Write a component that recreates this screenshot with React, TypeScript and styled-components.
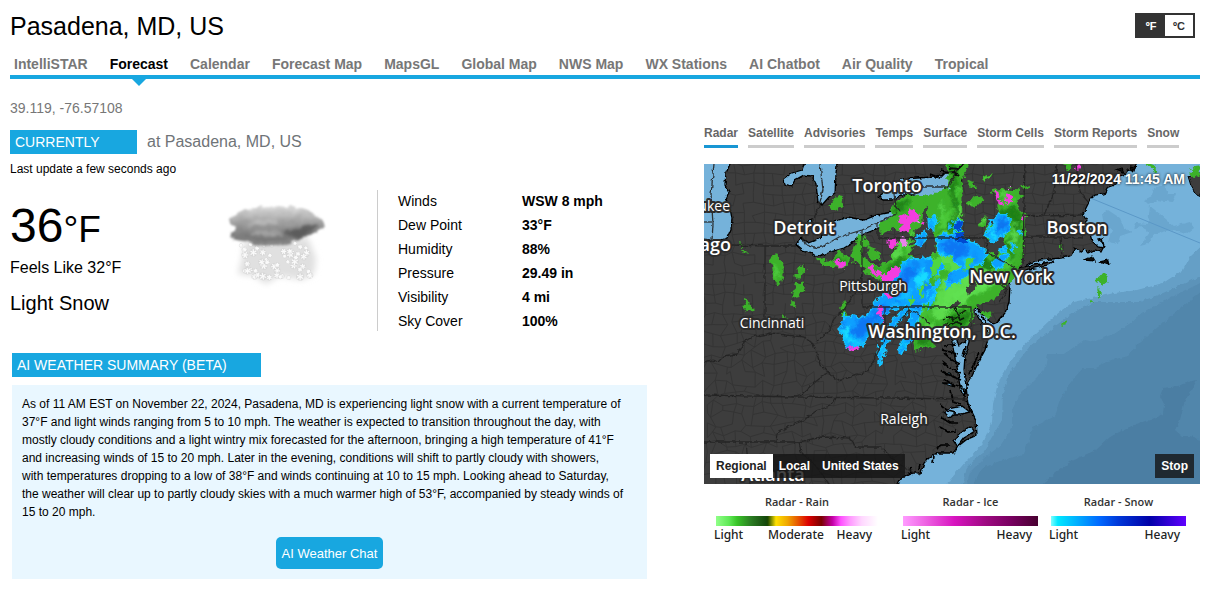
import React, { useState } from 'react';
import styled, { createGlobalStyle } from 'styled-components';

const BLUE = '#18a7e0';

const GlobalStyle = createGlobalStyle`
  * { box-sizing: border-box; }
  body {
    margin: 0;
    background: #fff;
    color: #000;
    font-family: "Liberation Sans", Arial, Helvetica, sans-serif;
  }
  button { font-family: inherit; cursor: pointer; }
`;

const Page = styled.main`
  padding: 11px 13px 13px 10px;
`;

const Header = styled.header`
  display: flex;
  justify-content: space-between;
  padding-right: 5px;
`;

const Title = styled.h1`
  margin: 0;
  font-size: 25px;
  font-weight: 400;
  line-height: 30px;
`;

const UnitToggle = styled.div`
  display: flex;
  height: 25px;
  margin-top: 2px;
  border: 2px solid #333;
`;

const UnitButton = styled.button<{ $active: boolean }>`
  width: 28px;
  padding: 0;
  border: 0;
  font-size: 11px;
  font-weight: 700;
  line-height: 20px;
  color: ${p => (p.$active ? '#fff' : '#333')};
  background: ${p => (p.$active ? '#333' : '#fff')};
`;

const Nav = styled.nav`
  display: flex;
  gap: 22px;
  margin-top: 13px;
  padding: 0 4px;
  border-bottom: 4px solid ${BLUE};
`;

const NavLink = styled.a<{ $active?: boolean }>`
  position: relative;
  padding-bottom: 1px;
  font-size: 14px;
  font-weight: 700;
  line-height: 20px;
  white-space: nowrap;
  text-decoration: none;
  color: ${p => (p.$active ? '#000' : '#777')};
  ${p => p.$active && `
    &::after {
      content: "";
      position: absolute;
      top: 25px;
      left: 50%;
      margin-left: -7px;
      border: 7px solid transparent;
      border-bottom-width: 0;
      border-top-color: ${BLUE};
    }
  `}
`;

const Columns = styled.div`
  display: grid;
  grid-template-columns: minmax(0, 1fr) 496px;
`;

const LeftColumn = styled.section`
  padding: 19px 57px 0 0;
`;

const Coordinates = styled.div`
  font-size: 14px;
  line-height: 20px;
  color: #777;
`;

const CurrentRow = styled.div`
  display: flex;
  align-items: center;
  gap: 10px;
  margin-top: 12px;
`;

const SectionLabel = styled.h2<{ $width: number }>`
  width: ${p => p.$width}px;
  margin: 0;
  padding-left: 5px;
  font-size: 14px;
  font-weight: 400;
  line-height: 24px;
  color: #fff;
  background: ${BLUE};
`;

const Place = styled.span`
  font-size: 16px;
  line-height: 24px;
  color: #6f7478;
`;

const Updated = styled.div`
  margin-top: 6px;
  font-size: 12px;
  line-height: 18px;
`;

const Conditions = styled.div`
  display: flex;
  height: 141px;
  margin-top: 12px;
`;

const Reading = styled.div`
  width: 216px;
`;

const Temperature = styled.div`
  padding-top: 8px;
  font-size: 48px;
  line-height: 56px;
`;

const Degree = styled.span`
  font-size: 37px;
`;

const FeelsLike = styled.div`
  font-size: 16px;
  line-height: 20px;
`;

const Sky = styled.div`
  margin-top: 13px;
  font-size: 20px;
  line-height: 24px;
`;

const IconCell = styled.div`
  width: 152px;
  padding-top: 8px;
  border-right: 1px solid #ccc;
  svg { display: block; }
`;

const Details = styled.table`
  height: 144px;
  margin: -1px 0 0 20px;
  border-collapse: collapse;
  font-size: 14px;
  line-height: 24px;
  th, td { padding: 0; text-align: left; }
  th { width: 124px; font-weight: 400; }
  td { font-weight: 700; }
`;

const Summary = styled.section`
  margin: 22px 0 0 2px;
`;

const SummaryBox = styled.div`
  margin-top: 8px;
  padding: 10px;
  background: #e9f7ff;
`;

const SummaryText = styled.p`
  margin: 0 0 16px;
  font-size: 12px;
  line-height: 18px;
  white-space: pre-line;
`;

const ChatButton = styled.button`
  display: block;
  height: 32px;
  margin: 0 auto;
  padding: 0 6px;
  border: 0;
  border-radius: 5px;
  font-size: 13px;
  color: #fff;
  background: ${BLUE};
`;

const RightColumn = styled.section`
  padding-top: 44px;
`;

const LayerTabs = styled.div`
  display: flex;
  gap: 10px;
`;

const LayerTab = styled.button<{ $active: boolean }>`
  padding: 0 0 2px;
  border: 0;
  border-bottom: 3px solid ${p => (p.$active ? '#1896d3' : '#ccc')};
  background: none;
  font-size: 12px;
  font-weight: 700;
  line-height: 20px;
  white-space: nowrap;
  color: #666;
`;

const MapFrame = styled.div`
  position: relative;
  margin-top: 16px;
  height: 320px;
  overflow: hidden;
  > svg { display: block; width: 100%; height: 100%; }
`;

const MapTime = styled.time`
  position: absolute;
  top: 6px;
  right: 15px;
  font-size: 14px;
  font-weight: 700;
  line-height: 18px;
  color: #fff;
  text-shadow: 0 0 3px #000;
`;

const MapControls = styled.div`
  position: absolute;
  left: 6px;
  right: 6px;
  bottom: 6px;
  display: flex;
  justify-content: space-between;
`;

const ControlGroup = styled.div`
  display: flex;
  background: rgba(20, 20, 20, 0.8);
`;

const ControlButton = styled.button<{ $active?: boolean }>`
  height: 24px;
  padding: 0 6px;
  border: 0;
  font-size: 12px;
  font-weight: 700;
  color: ${p => (p.$active ? '#222' : '#fff')};
  background: ${p => (p.$active ? '#fff' : 'transparent')};
`;

const Legends = styled.div`
  display: flex;
  padding: 9px 12px 0;
`;

const Legend = styled.div<{ $width: number; $gap: number }>`
  width: ${p => p.$width}px;
  margin-right: ${p => p.$gap}px;
  font-family: "Open Sans", "Noto Sans", sans-serif;
`;

const LegendTitle = styled.div`
  font-size: 11px;
  font-weight: 600;
  line-height: 18px;
  text-align: center;
  color: #333;
`;

const LegendBar = styled.div<{ $colors: string }>`
  height: 10px;
  margin: 5px 0 0;
  background: linear-gradient(to right, ${p => p.$colors});
`;

const LegendScale = styled.div`
  display: grid;
  grid-template-columns: 1fr auto 1fr;
  margin-left: -2px;
  font-family: "Noto Sans", "Open Sans", sans-serif;
  font-size: 12px;
  font-weight: 500;
  line-height: 18px;
  color: #222;
  span:last-child { text-align: right; padding-right: 6px; }
`;

/* Deterministic pseudo random numbers, so each render draws the same lines. */
const makeRandom = (seed: number) => () => {
  seed = (seed * 1664525 + 1013904223) % 4294967296;
  return seed / 4294967296;
};

const countyMesh = (() => {
  const rnd = makeRandom(7);
  const step = 10;
  const cols = 42;
  const rows = 34;
  const pts: number[][][] = [];
  for (let r = 0; r <= rows; r++) {
    pts.push([]);
    for (let c = 0; c <= cols; c++) {
      const wobble = r > 15 ? 8 : 4;
      pts[r].push([
        Math.round((c * step + (rnd() - 0.5) * wobble) * 10) / 10,
        Math.round((r * step + (rnd() - 0.5) * wobble) * 10) / 10,
      ]);
    }
  }
  let d = '';
  for (let r = 0; r < rows; r++) {
    for (let c = 0; c < cols; c++) {
      const [x, y] = pts[r][c];
      if (rnd() > 0.12) d += `M${x} ${y}L${pts[r][c + 1].join(' ')}`;
      if ((r + c) % 2 === 0 || rnd() > 0.55) d += `M${x} ${y}L${pts[r + 1][c].join(' ')}`;
    }
  }
  return d;
})();

/* Short slanted streaks that give the echoes their grain. */
const makeStreaks = (seed: number, count: number, box: number[], tones: string[]) => {
  const rnd = makeRandom(seed);
  return Array.from({ length: count }, () => ({
    x: box[0] + rnd() * box[2],
    y: box[1] + rnd() * box[3],
    rx: 1.5 + rnd() * 3,
    ry: 3 + rnd() * 8,
    turn: 10 + rnd() * 50,
    fill: tones[Math.floor(rnd() * tones.length)],
  }));
};

const greenStreaks = makeStreaks(12, 170, [172, 0, 150, 190], ['#2c9420', '#54d843', '#6fea5c', '#319f24', '#4ccb3b']);
const blueStreaks = makeStreaks(5, 130, [134, 50, 175, 150], ['#00b8ff', '#0c8af8', '#0a74ee', '#12cfff', '#1496ff']);

const stateLines = [
  'M27 81L61 82L92 82', 'M61 82V166', 'M158 66V143H267V162', 'M174 60V74H282L283 88L296 96L311 104',
  'M158 110L156 126L148 132L140 146L132 152L124 168L113 178',
  'M0 198L8 196L14 198L20 192L33 190L40 178L48 173L67 169L82 171L100 173L108 178L113 190L116 200L124 208',
  'M88 233L98 230L110 219L124 208L133 216L147 213L163 208L170 196L176 184L186 168L198 154L206 146L218 152L226 160',
  'M0 231L90 233L180 234L262 235', 'M72 278L73 269L86 262L100 256L112 247L126 242L131 234',
  'M0 278H95L117 273L145 274L152 283H177L193 299L215 311', 'M42 278L46 320', 'M95 278L97 288L112 302L125 320',
  'M97 70L101 80L110 84L118 83L135 73L158 66L175 58L193 50', 'M116 0L119 26L114 46L107 62', 'M190 30L192 42L196 47',
  'M218 23H243L249 15L253 5L260 0', 'M10 0L7 30L9 60L8 76', 'M0 58H9',
  'M318 51L340 52L378 51', 'M319 73L356 73L379 74', 'M321 0L320 40L319 100', 'M356 73L358 93',
  'M353 0L350 28L340 51', 'M372 0L376 28L384 38', 'M181 143V160', 'M294 118L303 126L296 138',
];

const oceanPath =
  'M434 -8L430 7L424 6L420 12L413 14L411 21L403 24L400 30L391 31L386 36L382 44L379 50L383 56L380 63L386 70L388 77L394 83L399 84L398 78L394 75L398 74L400 82L397 88L390 86L384 89L380 85L376 88L371 84L366 92L358 94L346 95L336 96L326 99L318 104L309 109L305 115L306 122L305 138L301 149L293 159L288 160L283 152L277 150L272 142L271 148L277 158L282 166L284 174L281 186L274 199L268 212L262 222L264 240L272 256L273 271L262 276L253 283L249 289L233 289L225 294L220 299L217 309L207 309L197 314L190 328H506V-8Z';

const depths = [
  { fill: '#659fc6', d: 'M506 74L486 93L479 106L459 119L433 126L410 129L393 133L369 138L358 146L346 156L329 172L312 190L303 203L297 212L293 223L289 240L288 259L279 279L263 296L246 316L240 328H506Z' },
  { fill: '#5b93b9', d: 'M506 108L459 129L436 138L410 138L390 138L379 143L366 151L346 166L326 182L313 199L304 212L299 229L298 256L288 273L279 289L263 303L257 328H506Z' },
  { fill: '#568cb2', d: 'M506 114L462 136L440 148L428 158L410 170L390 178L380 176L360 190L344 190L340 206L326 220L316 230L308 246L308 264L296 282L280 294L266 308L261 328H506Z' },
  { fill: '#5186ab', d: 'M506 120L482 140L460 158L448 168L436 178L423 192L404 197L391 204L379 204L370 214L363 223L355 238L351 252L340 258L329 263L325 276L320 290L306 294L293 298L277 305L266 328H506Z' },
  { fill: '#4c7ea3', d: 'M493 216L484 218L474 222L459 224L456 232L460 240L459 250L446 256L432 260L419 266L406 273L392 286L369 296L352 308L330 328H506V279L486 272L478 272L471 266L476 256L480 240Z' },
  { fill: '#6aa6ce', d: 'M398 50L404 46L416 54L420 64L428 68L416 72L414 80L404 78L408 66L400 62Z' },
  { fill: '#6aa6ce', d: 'M436 82L446 68L436 62L430 66L432 59L444 60L446 42L456 50L470 62L486 58L490 64L482 70L466 66L450 70L444 80Z' },
  { fill: '#6aa6ce', d: 'M440 36L448 32L450 24L460 20L464 30L472 30L468 38L454 36L444 40Z' },
];

const lakes = [
  'M-4 -8H26V0L22 9L21 20L25 28L22 35L26 44L28 55L27 65L23 74L17 76H6L-4 75Z',
  'M102 -6L98 6L88 9L80 15L81 21L87 23L91 16L100 11L108 12L112 20L114 38L118 41L125 33L131 29L132 10L134 -6Z',
  'M104 57L108 55L109 60L106 63L104 61Z',
  'M92 81L97 74L104 79L112 76L125 66L130 58L143 53L160 56L173 51L188 48L194 46L190 53L180 62L160 70L150 78L140 84L126 88L113 93L106 88L98 86Z',
  'M175 33L179 27L188 27L197 15L213 14L230 13L242 9L256 6L256 28L244 33L223 35L210 31L198 31L188 36L178 36Z',
  'M246 150L250 148L251 158L250 168L255 182L260 178L265 168L265 178L261 192L260 206L262 222L260 234L256 224L254 208L251 194L248 178Z',
  'M240 248L248 244L258 242L266 248L258 250L250 250L246 254Z', 'M238 208L248 212L246 209Z', 'M238 219L250 223L246 219Z',
  'M250 276L258 268L266 262L270 268L260 274L254 282Z',
];

const inlets =
  'M249 152L246 158M250 160L244 166M251 170L242 172L236 178M252 180L240 182M253 190L246 188L238 186M256 200L248 196L240 189M256 209L246 204L238 198M257 216L247 212L236 206M258 223L248 220L240 215M257 240L249 238L247 226M252 249L244 247L236 240M254 259L246 259L238 254M252 267L244 268L236 263M246 281L238 281L232 285M275 188L271 198L265 210M262 182L259 192M230 292L229 298M226 10L236 14L242 8L252 12M236 6L248 8L254 2M216 300L215 306M208 310L207 304M250 140L244 145M262 144L256 148M298 152L294 157M278 152L282 159M256 222L262 228L258 232M262 236L268 250';

const greens = [
  'M242 -6H264V0L260 10L258 20L257 72L272 80L284 89L298 94L311 102L307 117L294 131L280 139L270 144L268 157L261 164L242 168L236 176L226 182L211 186L209 177L216 162L210 150L200 138L194 120L186 112L178 118L168 112L160 108L160 104L178 101L190 92L193 80L205 73L211 80L204 91L214 96L228 94L232 84L231 72L226 62L224 45L222 34L230 30L240 28L246 22Z',
  'M188 40L204 32L222 33L221 42L219 54L215 62L207 72L202 66L190 63L176 70L176 62L190 52Z',
  'M288 28L300 25L315 26L318 32L313 40L315 46L322 52L320 70L318 96L308 110L298 108L287 98L296 88L304 80L300 72L284 76L281 69L288 60L296 48L294 42L298 38Z',
  'M148 90L152 80L158 71L162 76L158 85L160 95L172 102L168 108L158 100L150 98Z', 'M164 84L174 88L176 95L168 96Z',
  'M158 75L164 76L165 82L160 82Z', 'M114 94L122 97L130 95L133 88L140 90L145 94L144 102L135 104L125 103L115 100Z',
  'M123 40L130 37L133 31L138 34L138 42L134 46L127 43Z', 'M67 93L72 90L77 98L79 107L75 120L72 118L69 105Z',
  'M91 112L94 106L100 102L101 106L96 108L94 114Z', 'M89 132L93 120L99 118L100 124L96 132L92 133Z',
  'M42 136L46 138L44 142L49 146L46 147L41 145Z', 'M36 78L38 82L37 83ZM39 86L43 88L41 89ZM87 138H91V141H87ZM80 152L84 156L80 158Z',
  'M264 20L268 18L273 22L266 23ZM264 38L270 34L277 33L279 36L274 41L266 42ZM274 60L278 57L283 52L281 62L276 63ZM279 14L288 9L286 13L280 16Z',
  'M318 23L326 21L323 25ZM278 150L284 148L288 151L280 152Z', 'M395 114L399 109L404 112L403 118L398 122L394 119Z', 'M394 125L397 130L395 133Z',
  'M441 0H448L454 7L449 5ZM488 5L496 4V14L492 10L487 14Z', 'M358 158H361V160H358ZM356 81H359V84H356ZM386 137H388V139H386Z',
  'M137 142L140 138L141 147L143 152L138 152Z', 'M360 0H368L364 5Z',
];

const darkGreens = [
  'M246 0L254 0L252 20L254 44L250 70L244 66L248 44L244 20Z', 'M252 66L262 80L280 92L296 98L288 108L268 92L254 80Z',
  'M304 40L314 44L318 60L312 80L306 96L304 82L310 62L298 48Z', 'M194 38L206 35L200 44L190 52Z', 'M240 154L266 148L262 162L244 166Z',
  'M212 176L226 168L232 174L220 182Z', 'M180 104L194 96L200 90L196 104L186 108Z', 'M132 92L142 94L138 100L130 98Z', 'M216 94L230 100L226 112L218 106Z',
];

const lightGreens = [
  'M236 40L242 36L240 60L246 90L256 100L272 104L284 110L292 120L276 130L256 140L246 132L254 124L248 112L236 100L234 76L240 66Z',
  'M256 112L280 104L296 108L288 118L268 126Z', 'M236 112L250 116L262 128L252 142L238 146L230 138L236 126Z', 'M196 70L202 78L196 90L188 98Z',
  'M306 66L314 60L312 82L306 88Z', 'M226 150L236 140L248 144L232 156Z', 'M70 98L75 108L73 114Z',
];

const blues = [
  'M200 98L206 94L215 96L221 92L228 96L241 101L236 108L228 111L224 120L233 130L230 136L222 140L212 146L200 142L190 146L180 150L176 160L166 172L158 182L147 186L141 180L139 172L134 166L139 160L140 152L150 151L160 155L166 148L172 138L180 130L188 120L192 112Z',
  'M211 72L222 67L223 72L218 82L211 80Z', 'M224 54L231 51L234 56L228 68L225 66Z', 'M232 74L240 70L252 68L264 76L276 82L284 90L279 98L270 102L264 112L252 120L242 121L246 110L256 104L248 92L238 92L233 84Z',
  'M250 58L255 55L258 60L257 67L250 65Z', 'M192 152L204 144L198 154L188 168L182 180L180 190L176 201L174 200L176 180L182 166Z',
  'M208 146L216 146L214 158L211 168L205 178L197 190L195 188L200 172Z', 'M286 56L294 50L306 53L306 64L300 70L294 77L286 76L281 69L288 63Z',
  'M288 100L294 94L300 90L304 92L298 102L292 105Z', 'M306 84L311 80L310 88ZM296 86L302 82L300 88ZM314 68L318 66L316 72Z', 'M222 132L230 120L236 116L232 126L226 140Z',
];

const deepBlues = [
  'M236 80L248 76L260 82L262 90L254 94L244 90Z', 'M150 158L166 152L184 140L196 134L186 148L170 162L156 172L148 168Z', 'M204 100L214 104L210 116L202 124L196 118Z',
  'M296 56L304 58L298 66L290 70Z', 'M188 120L200 110L196 128L184 134Z',
];

const darkestBlues = ['M250 58L256 56L258 61L256 66L251 65Z', 'M250 71L256 69L262 74L262 79L254 78Z'];

const cyans = [
  'M134 166L142 162L150 174L160 178L152 185L142 180Z', 'M176 178L180 178L178 192L175 196Z', 'M202 168L208 166L202 180L198 184Z',
  'M214 110L226 104L222 116L212 124Z', 'M226 54L231 54L228 64Z', 'M284 68L290 66L294 74L286 74Z',
];

const pinks = [
  'M197 50L205 52L206 47L213 46L215 54L208 60L203 69L198 66L199 60L193 59Z', 'M185 76L191 74L194 79L188 84L185 82Z', 'M164 102L170 103L174 110L167 108Z',
  'M174 107L179 108L178 113L174 111Z', 'M177 115L184 108L188 104L194 102L195 112L190 117L180 118Z', 'M181 130L186 128L187 133L183 135Z', 'M174 143L180 141L177 149L180 157L174 152Z',
  'M145 183L152 182L153 185L147 187Z', 'M132 96L137 99L140 97L141 102L137 104L132 101Z', 'M291 29L295 28L296 34L292 36Z', 'M301 30L306 30L308 37L304 40L301 36Z', 'M294 37L299 38L298 42L295 41Z',
  'M372 2L376 2L376 5L373 5Z', 'M317 53H320V57H317Z', 'M215 58L219 57L218 60Z', 'M166 106L169 105L169 106Z',
];

const holes = ['M220 43L223 44L224 66L217 68Z', 'M224 76L231 74L232 90L216 91L224 84Z', 'M286 80L298 77L302 80L292 87L287 86Z', 'M262 124L270 118L272 122L264 130Z', 'M245 140L256 138L254 142L246 144Z', 'M204 79L210 77L210 80L206 83Z'];

const cities: { name: string; x: number; y: number; big?: boolean; anchor?: 'end' }[] = [
  { name: 'Toronto', x: 183, y: 28, big: true },
  { name: 'Detroit', x: 100, y: 70, big: true },
  { name: 'Boston', x: 373, y: 70, big: true },
  { name: 'New York', x: 307, y: 119, big: true },
  { name: 'Washington, D.C.', x: 238, y: 174, big: true },
  { name: 'Atlanta', x: 69, y: 317, big: true },
  { name: 'Chicago', x: 27, y: 87, big: true, anchor: 'end' },
  { name: 'Milwaukee', x: 26, y: 47, anchor: 'end' },
  { name: 'Pittsburgh', x: 169, y: 127 },
  { name: 'Cincinnati', x: 68, y: 164 },
  { name: 'Raleigh', x: 200, y: 260 },
];

const RadarMap = () => (
  <svg viewBox="0 0 496 320" preserveAspectRatio="xMidYMid slice" role="img" aria-label="Regional radar map">
    <defs>
      <filter id="ragged" x="-5%" y="-5%" width="110%" height="110%">
        <feTurbulence type="fractalNoise" baseFrequency="0.16" numOctaves="3" seed="4" result="n" />
        <feDisplacementMap in="SourceGraphic" in2="n" scale="9" xChannelSelector="R" yChannelSelector="G" />
      </filter>
      <filter id="soft" x="-10%" y="-10%" width="120%" height="120%">
        <feTurbulence type="fractalNoise" baseFrequency="0.09" numOctaves="3" seed="9" result="n" />
        <feDisplacementMap in="SourceGraphic" in2="n" scale="14" xChannelSelector="R" yChannelSelector="G" />
        <feGaussianBlur stdDeviation="1.5" />
      </filter>
      <filter id="grain" x="-5%" y="-5%" width="110%" height="110%"><feGaussianBlur stdDeviation="0.9" /></filter>
      <filter id="coast" x="-5%" y="-5%" width="110%" height="110%">
        <feTurbulence type="fractalNoise" baseFrequency="0.2" numOctaves="2" seed="2" result="n" />
        <feDisplacementMap in="SourceGraphic" in2="n" scale="4" xChannelSelector="R" yChannelSelector="G" />
      </filter>
      <clipPath id="greenArea">{greens.map(d => <path key={d} d={d} />)}</clipPath>
      <clipPath id="blueArea">{blues.map(d => <path key={d} d={d} />)}</clipPath>
      <clipPath id="oceanArea"><path d={oceanPath} /></clipPath>
    </defs>
    <rect width="496" height="320" fill="#3d3d3d" />
    <path d={countyMesh} fill="none" stroke="#343434" strokeWidth="1" />
    <g filter="url(#coast)" stroke="#000" strokeWidth="1.3" fill="#74b2da">
      <path d={oceanPath} />
      {lakes.map(d => <path key={d} d={d} />)}
      <path d={inlets} fill="none" strokeWidth="1.7" />
      <path d="M308 107L318 103L336 100L350 97L344 101L330 104L316 107Z" fill="#3d3d3d" />
      <path d="M380 96L388 92L391 97ZM396 98L404 96L405 101ZM412 6L418 4L420 9ZM426 2L432 3L428 8Z" fill="#111" />
    </g>
    <g clipPath="url(#oceanArea)">
      {depths.map(s => <path key={s.d} d={s.d} fill={s.fill} filter="url(#coast)" />)}
      <path d="M384 33L496 79" stroke="#5b98c7" strokeWidth="1" />
    </g>
    <path d="M484 12L487 22L492 30L500 34V8L490 10Z" fill="#3d3d3d" stroke="#000" filter="url(#coast)" />
    <g filter="url(#ragged)">
      {greens.map(d => <path key={d} d={d} fill="#3cb22b" stroke="#3cb22b" strokeWidth="1.5" strokeLinejoin="round" />)}
      <g clipPath="url(#greenArea)">
        <g filter="url(#grain)" opacity="0.55">
          {greenStreaks.map((s, i) => (
            <ellipse key={i} rx={s.rx} ry={s.ry} fill={s.fill} transform={`translate(${s.x} ${s.y}) rotate(${s.turn})`} />
          ))}
        </g>
        {darkGreens.map(d => <path key={d} d={d} fill="#1d7a15" opacity="0.85" filter="url(#soft)" />)}
        {lightGreens.map(d => <path key={d} d={d} fill="#62e252" opacity="0.85" filter="url(#soft)" />)}
      </g>
      {holes.map(d => <path key={d} d={d} fill="#3d3d3d" />)}
      {blues.map(d => <path key={d} d={d} fill="#0da0ff" stroke="#18c4ff" strokeWidth="1.5" strokeLinejoin="round" />)}
      <g clipPath="url(#blueArea)">
        {deepBlues.map(d => <path key={d} d={d} fill="#0a6cf0" opacity="0.8" filter="url(#soft)" />)}
        {cyans.map(d => <path key={d} d={d} fill="#14dcff" filter="url(#soft)" />)}
        <g filter="url(#grain)" opacity="0.6">
          {blueStreaks.map((s, i) => (
            <ellipse key={i} rx={s.rx} ry={s.ry * 0.7} fill={s.fill} transform={`translate(${s.x} ${s.y}) rotate(${s.turn})`} />
          ))}
        </g>
      </g>
      {darkestBlues.map(d => <path key={d} d={d} fill="#0648d0" />)}
      <path d="M228 96L234 92L238 96L232 108L226 112ZM214 126L220 118L222 122L216 134ZM204 136L210 130L210 136L206 142ZM262 98L270 94L268 100L260 108ZM240 100L246 98L244 108Z" fill="#4fd63f" />
      <path d="M228 124L232 118L236 114L234 122L229 130ZM222 146L228 136L232 134L228 144ZM240 124L246 118L246 123L241 128ZM244 64L246 60L248 66Z" fill="#12b4ff" />
      {pinks.map(d => <path key={d} d={d} fill="#f43ce0" stroke="#f43ce0" strokeWidth="0.8" />)}
      <path d="M197 75L202 73L203 81L198 83ZM212 57L215 55L215 59ZM303 22L306 22L305 25Z" fill="#e884ea" />
    </g>
    <g fill="none" stroke="#242424" strokeWidth="1.3" strokeLinejoin="round" filter="url(#coast)" opacity="0.9">
      {stateLines.map(d => <path key={d} d={d} />)}
    </g>
    <path d="M240 156L246 152L250 156L256 150L262 146M244 162L252 158L258 160M238 164L244 158M252 148L256 156L260 154M250 144L254 150" fill="none" stroke="#0a1a08" strokeWidth="1.4" filter="url(#coast)" />
    <path d="M253 6L259 0M240 9L250 8L255 12M246 4L253 5" fill="none" stroke="#111" strokeWidth="2" filter="url(#coast)" />
    <g fontFamily='"Open Sans", "Noto Sans", sans-serif' fill="#fff" stroke="#2c2c2c" strokeWidth="4" strokeLinejoin="round" paintOrder="stroke">
      {cities.map(c => (
        <text key={c.name} x={c.x} y={c.y} fontSize={c.big ? 18 : 14} fontWeight={c.big ? 600 : 500} textAnchor={c.anchor ?? 'middle'}>
          {c.name}
        </text>
      ))}
    </g>
  </svg>
);

const flakes = (() => {
  const rnd = makeRandom(31);
  return Array.from({ length: 50 }, (_, i) => ({
    x: 18 + ((i * 37) % 70) + rnd() * 4,
    y: 44 + rnd() * 36,
    r: 1 + rnd() * 2,
    turn: rnd() * 60,
  }));
})();

const SnowIcon = () => (
  <svg width="110" height="92" viewBox="4 0 110 92" role="img" aria-label="Light snow">
    <defs>
      <linearGradient id="cloudTone" x1="0" y1="0" x2="0" y2="1">
        <stop offset="0" stopColor="#dedede" />
        <stop offset="0.4" stopColor="#a0a0a0" />
        <stop offset="0.75" stopColor="#7c7c7c" />
        <stop offset="1" stopColor="#8e8e8e" />
      </linearGradient>
      <filter id="cloudEdge" x="-15%" y="-20%" width="130%" height="140%">
        <feTurbulence type="fractalNoise" baseFrequency="0.12" numOctaves="4" seed="6" result="n" />
        <feDisplacementMap in="SourceGraphic" in2="n" scale="7" xChannelSelector="R" yChannelSelector="G" />
        <feGaussianBlur stdDeviation="0.9" />
      </filter>
      <filter id="haze" x="-20%" y="-20%" width="140%" height="140%"><feGaussianBlur stdDeviation="3" /></filter>
      <filter id="shade" x="-20%" y="-40%" width="140%" height="180%"><feGaussianBlur stdDeviation="1.6" /></filter>
    </defs>
    <path d="M22 42L86 40L94 60L92 76L80 82L58 78L44 86L32 78L16 76L20 60Z" fill="#e0e0e0" filter="url(#haze)" />
    {flakes.map((f, i) => (
      <g key={i} transform={`translate(${f.x} ${f.y}) rotate(${f.turn})`}>
        <circle r={f.r + 1} fill="#cfcfcf" opacity="0.55" />
        {[0, 60, 120].map(a => (
          <line key={a} x1={-f.r} x2={f.r} transform={`rotate(${a})`} stroke="#fafafa" strokeWidth="1.2" strokeLinecap="round" />
        ))}
      </g>
    ))}
    <g filter="url(#cloudEdge)">
      <path d="M8 20Q14 13 28 12Q42 6 58 9Q76 7 88 15Q100 18 103 27Q98 35 84 38Q72 46 56 48Q38 50 22 43Q6 42 8 35Q14 32 12 28Q6 25 8 20Z" fill="url(#cloudTone)" />
      <path d="M20 36Q40 30 56 34Q68 30 80 35Q66 42 50 44Q30 44 20 36Z" fill="#777" filter="url(#shade)" />
      <path d="M60 35Q76 28 96 27Q90 36 76 40Z" fill="#5c5c5c" filter="url(#shade)" />
      <path d="M26 26Q34 20 42 23Q50 18 56 24Q44 28 26 26Z" fill="#bcbcbc" filter="url(#shade)" />
      <path d="M26 36Q36 30 46 33Q56 31 62 36Q46 39 26 36Z" fill="#a6a6a6" filter="url(#shade)" />
    </g>
  </svg>
);

const pages = ['IntelliSTAR', 'Forecast', 'Calendar', 'Forecast Map', 'MapsGL', 'Global Map', 'NWS Map', 'WX Stations', 'AI Chatbot', 'Air Quality', 'Tropical'];
const layers = ['Radar', 'Satellite', 'Advisories', 'Temps', 'Surface', 'Storm Cells', 'Storm Reports', 'Snow'];
const regions = ['Regional', 'Local', 'United States'];

const details = [
  ['Winds', 'WSW 8 mph'],
  ['Dew Point', '33°F'],
  ['Humidity', '88%'],
  ['Pressure', '29.49 in'],
  ['Visibility', '4 mi'],
  ['Sky Cover', '100%'],
];

const legends = [
  {
    title: 'Radar - Rain', width: 162, gap: 25, scale: ['Light', 'Moderate', 'Heavy'],
    colors: '#90ff88, #5fe956 8%, #38c428 13%, #2a7a22 22%, #14480c 31%, #1a4a00 32%, #ffe000 37%, #f0a800 44%, #e65000 51%, #dc0000 57%, #7a0000 65%, #c400a8 72%, #ff50ff 77%, #ff9cff 83%, #ffd8ff 90%, #fff',
  },
  { title: 'Radar - Ice', width: 135, gap: 13, scale: ['Light', '', 'Heavy'], colors: '#ff9cff, #ee66e4 16%, #d814c0 38%, #9c0a80 62%, #780060 80%, #480030' },
  { title: 'Radar - Snow', width: 135, gap: 0, scale: ['Light', '', 'Heavy'], colors: '#80ffff, #00e8ff 5%, #00b4ff 18%, #0068ff 36%, #0038d8 50%, #0000a8 73%, #6000ff' },
];

const summary = [
  'As of 11 AM EST on November 22, 2024, Pasadena, MD is experiencing light snow with a current temperature of',
  '37°F and light winds ranging from 5 to 10 mph. The weather is expected to transition throughout the day, with',
  'mostly cloudy conditions and a light wintry mix forecasted for the afternoon, bringing a high temperature of 41°F',
  'and increasing winds of 15 to 20 mph. Later in the evening, conditions will shift to partly cloudy with showers,',
  'with temperatures dropping to a low of 38°F and winds continuing at 10 to 15 mph. Looking ahead to Saturday,',
  'the weather will clear up to partly cloudy skies with a much warmer high of 53°F, accompanied by steady winds of',
  '15 to 20 mph.',
].join('\n');

export default function App() {
  const [unit, setUnit] = useState('ºF');
  const [layer, setLayer] = useState('Radar');
  const [region, setRegion] = useState('Regional');

  return (
    <Page>
      <GlobalStyle />
      <Header>
        <Title>Pasadena, MD, US</Title>
        <UnitToggle>
          {['ºF', 'ºC'].map(u => (
            <UnitButton key={u} $active={u === unit} onClick={() => setUnit(u)}>{u}</UnitButton>
          ))}
        </UnitToggle>
      </Header>
      <Nav>
        {pages.map(p => (
          <NavLink key={p} href="#" $active={p === 'Forecast'}>{p}</NavLink>
        ))}
      </Nav>
      <Columns>
        <LeftColumn>
          <Coordinates>39.119, -76.57108</Coordinates>
          <CurrentRow>
            <SectionLabel $width={127}>CURRENTLY</SectionLabel>
            <Place>at Pasadena, MD, US</Place>
          </CurrentRow>
          <Updated>Last update a few seconds ago</Updated>
          <Conditions>
            <Reading>
              <Temperature>36<Degree>°F</Degree></Temperature>
              <FeelsLike>Feels Like 32°F</FeelsLike>
              <Sky>Light Snow</Sky>
            </Reading>
            <IconCell><SnowIcon /></IconCell>
            <Details>
              <tbody>
                {details.map(([name, value]) => (
                  <tr key={name}><th scope="row">{name}</th><td>{value}</td></tr>
                ))}
              </tbody>
            </Details>
          </Conditions>
          <Summary>
            <SectionLabel $width={249}>AI WEATHER SUMMARY (BETA)</SectionLabel>
            <SummaryBox>
              <SummaryText>{summary}</SummaryText>
              <ChatButton>AI Weather Chat</ChatButton>
            </SummaryBox>
          </Summary>
        </LeftColumn>
        <RightColumn>
          <LayerTabs>
            {layers.map(l => (
              <LayerTab key={l} $active={l === layer} onClick={() => setLayer(l)}>{l}</LayerTab>
            ))}
          </LayerTabs>
          <MapFrame>
            <RadarMap />
            <MapTime>11/22/2024 11:45 AM</MapTime>
            <MapControls>
              <ControlGroup>
                {regions.map(r => (
                  <ControlButton key={r} $active={r === region} onClick={() => setRegion(r)}>{r}</ControlButton>
                ))}
              </ControlGroup>
              <ControlGroup><ControlButton>Stop</ControlButton></ControlGroup>
            </MapControls>
          </MapFrame>
          <Legends>
            {legends.map(l => (
              <Legend key={l.title} $width={l.width} $gap={l.gap}>
                <LegendTitle>{l.title}</LegendTitle>
                <LegendBar $colors={l.colors} />
                <LegendScale>{l.scale.map((s, i) => <span key={i}>{s}</span>)}</LegendScale>
              </Legend>
            ))}
          </Legends>
        </RightColumn>
      </Columns>
    </Page>
  );
}
